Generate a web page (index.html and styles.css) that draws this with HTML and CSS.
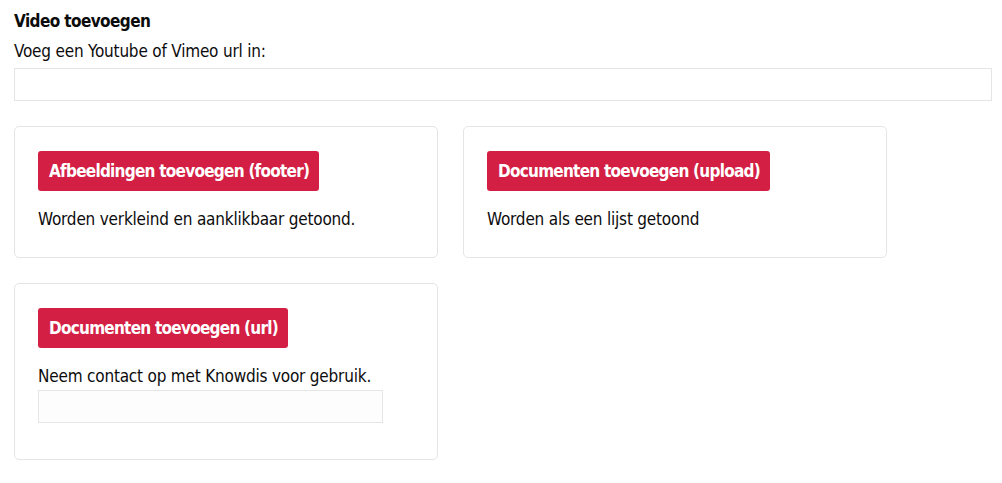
FILE: index.html
```html
<!DOCTYPE html>
<html lang="nl">
<head>
<meta charset="UTF-8" />
<meta name="viewport" content="width=device-width, initial-scale=1" />
<title>Media toevoegen</title>
<link rel="stylesheet" href="styles.css">
</head>
<body>

<div class="editor">
  <div class="video-block">
    <label class="title" for="video-url">Video toevoegen</label>
    <p class="hint">Voeg een Youtube of Vimeo url in:</p>
    <input type="text" id="video-url" class="field wide" />
  </div>

  <div class="cards">
    <div class="card">
      <button class="add">Afbeeldingen toevoegen (footer)</button>
      <p class="hint">Worden verkleind en aanklikbaar getoond.</p>
    </div>
    <div class="card">
      <button class="add">Documenten toevoegen (upload)</button>
      <p class="hint">Worden als een lijst getoond</p>
    </div>
    <div class="card card-url">
      <button class="add">Documenten toevoegen (url)</button>
      <p class="hint">Neem contact op met Knowdis voor gebruik.</p>
      <input type="text" class="field small" disabled />
    </div>
  </div>
</div>

</body>
</html>
```

FILE: styles.css
```css
body {
  margin: 0;
  font-family: "DejaVu Sans Condensed", "Liberation Sans", sans-serif;
  font-size: 17px;
  letter-spacing: -0.2px;
  color: #0c0c0c;
  background: #fff;
}
.editor {
  padding: 10px 10px 0 14px;
}
.title {
  display: block;
  font-weight: bold;
  letter-spacing: -0.6px;
  line-height: 22px;
}
.hint {
  margin: 8px 0 6px;
  line-height: 22px;
}
.field {
  display: block;
  box-sizing: border-box;
  height: 33px;
  border: 1px solid #e5e5e5;
  background: #fff;
  font: inherit;
}
.field.wide {
  width: 100%;
}
.field.small {
  width: 345px;
  height: 33px;
  background: #fdfdfd;
  margin-top: 1px;
}
.cards {
  display: flex;
  flex-wrap: wrap;
  gap: 25px;
  margin-top: 25px;
}
.card {
  box-sizing: border-box;
  width: 424px;
  border: 1px solid #e5e5e5;
  border-radius: 5px;
  padding: 24px 23px 25px;
}
.card-url {
  padding-bottom: 36px;
}
.card .hint {
  margin: 15px 0 0;
  line-height: 26px;
}
button.add {
  font: inherit;
  font-weight: bold;
  letter-spacing: -0.75px;
  color: #fff;
  background-color: #d31f44;
  border: none;
  border-radius: 3px;
  height: 40px;
  padding: 0 10px 0 11px;
  cursor: pointer;
}
```
